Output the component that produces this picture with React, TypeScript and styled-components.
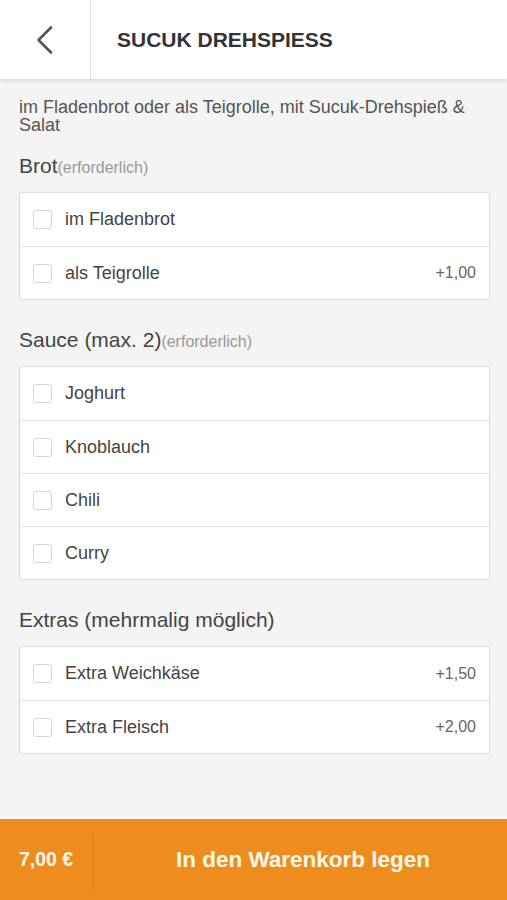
import React from "react";
import styled, { createGlobalStyle } from "styled-components";

const Global = createGlobalStyle`
  html, body { margin: 0; padding: 0; }
  body {
    background: #f4f4f4;
    font-family: "Liberation Sans", Arial, Helvetica, sans-serif;
    color: #444;
  }
  * { box-sizing: border-box; }
`;

const Page = styled.div`
  min-height: 100vh;
  display: flex;
  flex-direction: column;
`;

const Header = styled.header`
  height: 79px;
  background: #fff;
  display: flex;
  align-items: stretch;
  box-shadow: 0 2px 4px rgba(0, 0, 0, 0.12);
  position: relative;
  z-index: 1;
`;

const BackButton = styled.button`
  width: 91px;
  border: none;
  border-right: 1px solid #dcdcdc;
  background: transparent;
  display: flex;
  align-items: center;
  justify-content: center;
  padding: 0;
  cursor: pointer;
`;

const Title = styled.h1`
  margin: 0;
  padding-left: 26px;
  display: flex;
  align-items: center;
  font-size: 21px;
  font-weight: 700;
  color: #333;
`;

const Content = styled.main`
  flex: 1;
  padding: 20px 17px 40px 19px;
`;

const Description = styled.p`
  margin: 0;
  font-size: 18px;
  line-height: 17.5px;
  color: #555;
`;

const Section = styled.section<{ $first?: boolean }>`
  margin-top: ${(p) => (p.$first ? "20px" : "28px")};
`;

const SectionTitle = styled.h2`
  margin: 0 0 14px 0;
  font-size: 21px;
  font-weight: 400;
  line-height: 24px;
  height: 24px;
  color: #444;
`;

const Required = styled.span`
  font-size: 16px;
  line-height: 1;
  color: #999;
`;

const Card = styled.div`
  background: #fff;
  border: 1px solid #dadada;
  border-radius: 3px;
`;

const Row = styled.label`
  height: 53px;
  display: flex;
  align-items: center;
  padding: 0 13px;
  & + & {
    border-top: 1px solid #e2e2e2;
  }
`;

const Box = styled.span`
  width: 19px;
  height: 19px;
  border: 1px solid #d6d6d6;
  border-radius: 3px;
  background: #fff;
  flex-shrink: 0;
`;

const Label = styled.span`
  margin-left: 13px;
  font-size: 18px;
  color: #444;
  flex: 1;
`;

const Price = styled.span`
  font-size: 16px;
  color: #666;
`;

const Bar = styled.footer`
  height: 81px;
  background: #ef8c1e;
  display: flex;
  align-items: stretch;
  color: #fff8ec;
`;

const Total = styled.div`
  width: 93px;
  display: flex;
  align-items: center;
  padding-left: 19px;
  font-size: 19.5px;
  font-weight: 700;
  position: relative;
  &::after {
    content: "";
    position: absolute;
    right: 0;
    top: 16px;
    bottom: 10px;
    width: 1px;
    background: #e07f15;
  }
`;

const CartButton = styled.button`
  flex: 1;
  border: none;
  background: transparent;
  color: inherit;
  font-family: inherit;
  font-size: 22.5px;
  font-weight: 700;
  display: flex;
  align-items: center;
  justify-content: center;
  padding: 0 0 0 6px;
  cursor: pointer;
`;

type Option = { name: string; price?: string };

const groups: { title: string; required?: boolean; options: Option[] }[] = [
  {
    title: "Brot",
    required: true,
    options: [{ name: "im Fladenbrot" }, { name: "als Teigrolle", price: "+1,00" }],
  },
  {
    title: "Sauce (max. 2)",
    required: true,
    options: [{ name: "Joghurt" }, { name: "Knoblauch" }, { name: "Chili" }, { name: "Curry" }],
  },
  {
    title: "Extras (mehrmalig möglich)",
    options: [
      { name: "Extra Weichkäse", price: "+1,50" },
      { name: "Extra Fleisch", price: "+2,00" },
    ],
  },
];

export default function App() {
  return (
    <>
      <Global />
      <Page>
        <Header>
          <BackButton aria-label="Zurück">
            <svg width="20" height="30" viewBox="0 0 20 30">
              <path
                d="M16 2.5 L3.5 15 L16 27.5"
                fill="none"
                stroke="#555"
                strokeWidth="2.6"
                strokeLinecap="round"
                strokeLinejoin="round"
              />
            </svg>
          </BackButton>
          <Title>SUCUK DREHSPIESS</Title>
        </Header>
        <Content>
          <Description>
            im Fladenbrot oder als Teigrolle, mit Sucuk-Drehspieß &amp; Salat
          </Description>
          {groups.map((g, gi) => (
            <Section key={g.title} $first={gi === 0}>
              <SectionTitle>
                {g.title}
                {g.required && <Required>(erforderlich)</Required>}
              </SectionTitle>
              <Card>
                {g.options.map((o) => (
                  <Row key={o.name}>
                    <Box />
                    <Label>{o.name}</Label>
                    {o.price && <Price>{o.price}</Price>}
                  </Row>
                ))}
              </Card>
            </Section>
          ))}
        </Content>
        <Bar>
          <Total>7,00 €</Total>
          <CartButton>In den Warenkorb legen</CartButton>
        </Bar>
      </Page>
    </>
  );
}
